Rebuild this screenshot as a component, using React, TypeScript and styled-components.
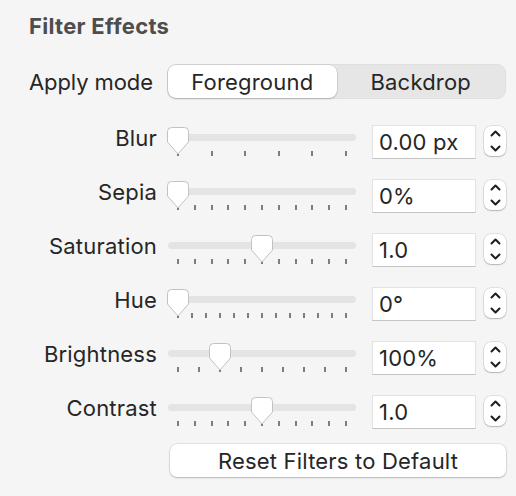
import React from 'react'
import styled, { createGlobalStyle } from 'styled-components'

const GlobalStyle = createGlobalStyle`
  html, body {
    margin: 0;
    padding: 0;
    background: #f5f5f5;
  }
  body {
    font-family: Inter, "Noto Sans", "Liberation Sans", sans-serif;
    color: #262626;
  }
`

const Panel = styled.div`
  width: 516px;
  height: 496px;
  box-sizing: border-box;
  padding: 14px 10px 0 29px;
  display: flex;
  flex-direction: column;
`

const Title = styled.h1`
  margin: 0;
  font-size: 22px;
  font-weight: 700;
  letter-spacing: 0.3px;
  line-height: 24px;
  color: #4d4d4d;
`

const ModeRow = styled.div`
  display: flex;
  align-items: center;
  margin-top: 26px;
  height: 35px;
`

const ModeLabel = styled.div`
  width: 138px;
  font-size: 22px;
  letter-spacing: -0.1px;
`

const Segmented = styled.div`
  flex: 1;
  display: flex;
  height: 35px;
  box-sizing: border-box;
  padding: 1px;
  border-radius: 9px;
  background: #e6e6e6;
  box-shadow: inset 0 0 0 0.5px rgba(0, 0, 0, 0.06);
`

const Segment = styled.div<{ $active?: boolean }>`
  flex: 1;
  display: flex;
  align-items: center;
  justify-content: center;
  font-size: 22px;
  letter-spacing: 0.2px;
  border-radius: 8px;
  background: ${(p) => (p.$active ? '#ffffff' : 'transparent')};
  box-shadow: ${(p) =>
    p.$active ? '0 0 0 0.5px rgba(0,0,0,0.12), 0 1px 2px rgba(0,0,0,0.18)' : 'none'};
`

const Rows = styled.div`
  display: flex;
  flex-direction: column;
  gap: 20px;
  margin-top: 26px;
`

const Row = styled.div`
  display: flex;
  align-items: flex-start;
  height: 34px;
`

const Label = styled.div`
  width: 128px;
  text-align: right;
  font-size: 22px;
  letter-spacing: 0.2px;
  line-height: 26px;
  margin-right: 10px;
`

const SliderBox = styled.div`
  position: relative;
  width: 190px;
  height: 34px;
`

const Track = styled.div`
  margin: 9px 0 0 1px;
  width: 188px;
  height: 7px;
  border-radius: 4px;
  background: #e4e4e4;
`

const Tick = styled.div`
  position: absolute;
  top: 26px;
  width: 2px;
  height: 5px;
  background: #7d7d7d;
`

const Thumb = styled.svg`
  position: absolute;
  top: 2px;
  width: 22px;
  height: 28px;
  overflow: visible;
`

const Field = styled.div`
  margin-left: 15px;
  width: 104px;
  height: 34px;
  box-sizing: border-box;
  padding-left: 6px;
  display: flex;
  align-items: center;
  font-size: 22px;
  letter-spacing: 0.2px;
  background: #ffffff;
  border: 0.5px solid #e2e2e2;
  border-bottom: 1px solid #c4c4c4;
`

const Stepper = styled.div`
  margin: 1px 0 0 8px;
  width: 22px;
  height: 30px;
  border-radius: 7px;
  background: #ffffff;
  box-shadow: 0 0 0 0.5px rgba(0, 0, 0, 0.16), 0 1px 1.5px rgba(0, 0, 0, 0.2);
  display: flex;
  flex-direction: column;
  align-items: center;
  justify-content: space-between;
  padding: 4px 0;
  box-sizing: border-box;
`

const ResetButton = styled.button`
  margin: 15px 0 0 141px;
  width: 336px;
  height: 33px;
  border: none;
  border-radius: 7px;
  background: #ffffff;
  box-shadow: 0 0 0 0.5px rgba(0, 0, 0, 0.14), 0 1px 2px rgba(0, 0, 0, 0.2);
  font-family: inherit;
  font-size: 22px;
  letter-spacing: 0.2px;
  color: #262626;
  padding: 0;
`

const Chevron = ({ up }: { up?: boolean }) => (
  <svg width="11" height="7" viewBox="0 0 11 7">
    <path
      d={up ? 'M1.5 5.5 L5.5 1.5 L9.5 5.5' : 'M1.5 1.5 L5.5 5.5 L9.5 1.5'}
      fill="none"
      stroke="#1e1e1e"
      strokeWidth="2"
      strokeLinecap="round"
      strokeLinejoin="round"
    />
  </svg>
)

interface SliderProps {
  value: number
  ticks: number
}

const Slider = ({ value, ticks }: SliderProps) => {
  const span = 168
  return (
    <SliderBox>
      <Track />
      {Array.from({ length: ticks }).map((_, i) => (
        <Tick key={i} style={{ left: 10 + (i * span) / (ticks - 1) }} />
      ))}
      <Thumb viewBox="0 0 22 28" style={{ left: value * span }}>
        <path
          d="M4.5 0.5 H17.5 Q21.5 0.5 21.5 4.5 V15 L11 27 L0.5 15 V4.5 Q0.5 0.5 4.5 0.5 Z"
          fill="#ffffff"
          stroke="#c2c2c2"
          strokeWidth="1"
        />
      </Thumb>
    </SliderBox>
  )
}

const filters = [
  { label: 'Blur', value: 0, ticks: 6, text: '0.00 px' },
  { label: 'Sepia', value: 0, ticks: 11, text: '0%' },
  { label: 'Saturation', value: 0.5, ticks: 11, text: '1.0' },
  { label: 'Hue', value: 0, ticks: 13, text: '0°' },
  { label: 'Brightness', value: 0.25, ticks: 9, text: '100%' },
  { label: 'Contrast', value: 0.5, ticks: 11, text: '1.0' },
]

const App = () => {
  return (
    <>
      <GlobalStyle />
      <Panel>
        <Title>Filter Effects</Title>
        <ModeRow>
          <ModeLabel>Apply mode</ModeLabel>
          <Segmented>
            <Segment $active>Foreground</Segment>
            <Segment>Backdrop</Segment>
          </Segmented>
        </ModeRow>
        <Rows>
          {filters.map((f) => (
            <Row key={f.label}>
              <Label>{f.label}</Label>
              <Slider value={f.value} ticks={f.ticks} />
              <Field>{f.text}</Field>
              <Stepper>
                <Chevron up />
                <Chevron />
              </Stepper>
            </Row>
          ))}
        </Rows>
        <ResetButton>Reset Filters to Default</ResetButton>
      </Panel>
    </>
  )
}

export default App
